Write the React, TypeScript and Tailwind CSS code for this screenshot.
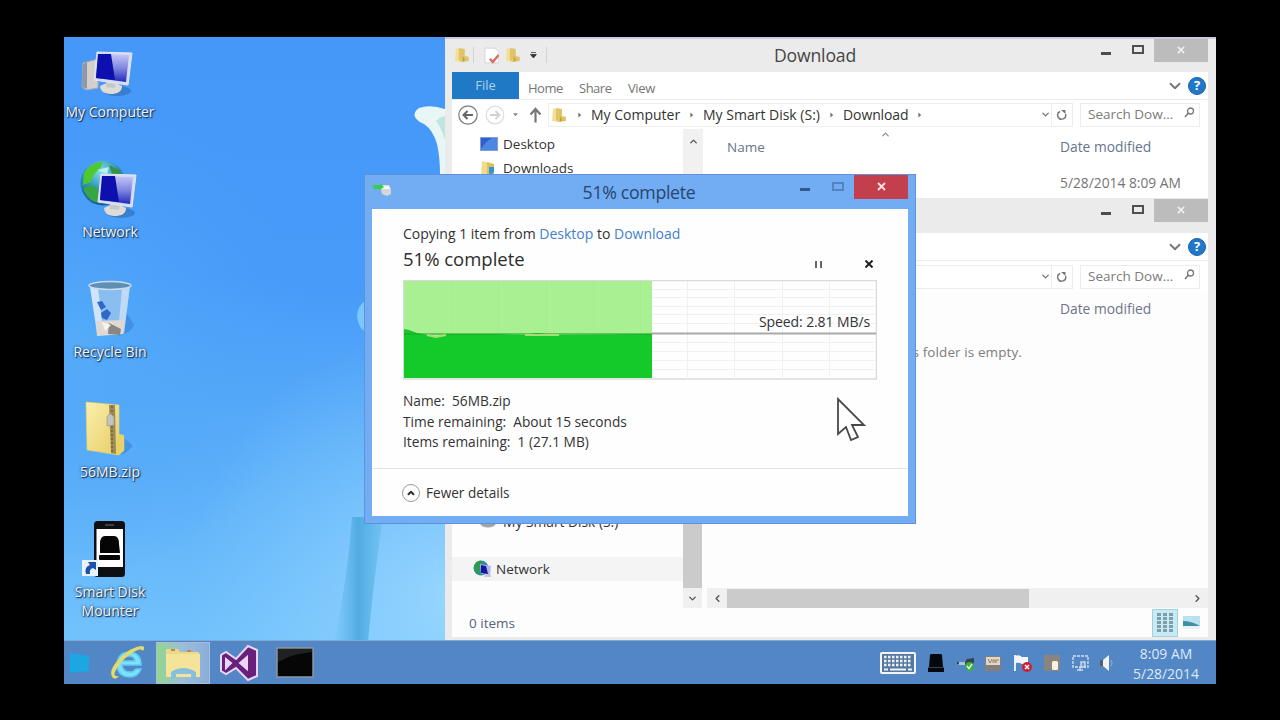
import React from 'react';
import { ChevronDown, ChevronLeft, ChevronRight, ChevronUp } from 'lucide-react';

const Monitor: React.FC = () => (
  <g>
    <ellipse cx="21" cy="39" rx="14" ry="5" fill="#2c62a8" opacity="0.5" />
    <path d="M4 34 Q15 27 26 34 Q26 42 14 42 Q4 41 4 34Z" fill="#dedcd4" />
    <path d="M10 28 L20 30 L19 36 L10 35Z" fill="#c4c8cf" />
    <path d="M1 0 L36 1 L32 33 L-2 28Z" fill="#d6dcef" stroke="#e4e6f2" strokeWidth="1" />
    <path d="M2 2 L33 3 L30 30 L0 26Z" fill="url(#screen)" />
    <path d="M2 2 L15 2 L19 28 L0 26Z" fill="#0d0fae" />
  </g>
);

const MyComputerIcon: React.FC = () => (
  <svg width="92" height="60" viewBox="0 0 92 60">
    <path d="M19 23 L34 19 L34 48 L22 50 L18 47Z" fill="#d3cfca" stroke="#a7abb3" strokeWidth="1" />
    <path d="M19 24 L23 22 L23 49 L18 47Z" fill="#8f98a8" />
    <g transform="translate(32 12)">
      <Monitor />
    </g>
  </svg>
);

const NetworkIcon: React.FC = () => (
  <svg width="92" height="60" viewBox="0 0 92 60">
    <circle cx="39" cy="23" r="22.5" fill="url(#globe)" />
    <path d="M20 13 Q28 2 39 2 L36 9 Q28 14 27 22 L19 25Z" fill="#50c92f" />
    <path d="M20 28 Q30 22 34 31 L36 43 Q26 43 20 31Z" fill="#36a545" />
    <path d="M45 5 L56 10 L58 17 L48 14Z" fill="#39914a" />
    <path d="M33 10 L45 7 L43 14Z" fill="#b9f0f3" />
    <g transform="translate(36 14)">
      <Monitor />
    </g>
  </svg>
);

const RecycleBinIcon: React.FC = () => (
  <svg width="92" height="60" viewBox="0 0 92 60">
    <path d="M62 32 L70 45 Q67 53 54 56Z" fill="#2c6fc4" opacity="0.4" />
    <path d="M26 5 L66 5 L60 54 L33 56Z" fill="#9cc6ee" opacity="0.75" />
    <path d="M26 7 L34 8 L38 41 L33 52Z" fill="#e2effb" opacity="0.8" />
    <path d="M58 8 L66 6 L60 53 L55 42Z" fill="#d7e6f6" opacity="0.7" />
    <path d="M32 41 L60 40 L59 54 L33 56Z" fill="#ded9d2" />
    <path d="M45 43 L57 49 L56 55 L44 54Z" fill="#8b8682" />
    <path d="M38 42 L47 45 L41 51Z" fill="#f6f4ee" />
    <path d="M33 22 L38 21 L42 27 L37 30Z M37 33 L43 29 L47 33 L43 40 L38 38Z" fill="#2f68cb" />
    <ellipse cx="46" cy="5.5" rx="21" ry="4" fill="#608fb6" stroke="#c8dced" strokeWidth="1.5" />
  </svg>
);

const ZipIcon: React.FC = () => (
  <svg width="92" height="60" viewBox="0 0 92 60">
    <path d="M58 36 L69 46 L60 54 L48 54Z" fill="#2c6fc4" opacity="0.4" />
    <path d="M22 2 L55 5 L55 36 L60 37 L60 50 L55 55 L23 50Z" fill="url(#folder)" stroke="#e2cb70" strokeWidth="0.7" />
    <path d="M55 34 L60 35 L60 51 L54 55 L50 54Z" fill="#e8d268" />
    <path d="M45 5 L51 5 L52 54 L47 53Z" fill="#9e8b54" />
    <path d="M48 6 V53" stroke="#6f6449" strokeWidth="1.5" strokeDasharray="2 2" />
    <path d="M43 17 Q46 11 50 17 L50 25 L43 26Z" fill="#c4c4bf" stroke="#a19c88" strokeWidth="0.8" />
  </svg>
);

const MounterIcon: React.FC = () => (
  <svg width="92" height="60" viewBox="0 0 92 60">
    <rect x="30" y="1" width="31" height="56" rx="3.5" fill="#0d1013" />
    <path d="M41 5 H50" stroke="#5d6266" strokeWidth="1.2" />
    <rect x="32.5" y="9" width="26.5" height="38" fill="#ffffff" />
    <path d="M36 33 L36 24 Q36 16 41 16 H50 Q55 16 55 24 L56 33Z" fill="#050505" />
    <rect x="35" y="35" width="21" height="5" rx="1" fill="#050505" />
    <rect x="18" y="40" width="16" height="16" fill="#e9f3fb" />
    <path d="M22 54 Q20 47 26 45 L24 42 H32 V50 L29 48 Q25 49 26 54Z" fill="#1c4fae" />
  </svg>
);

const SmallFolder: React.FC<{ className?: string }> = ({ className }) => (
  <svg className={className} width="16" height="16" viewBox="0 0 16 16">
    <path d="M2 1 L8 3 V15 L1 14Z" fill="#f2df95" />
    <path d="M5 1 L11 2 V9 L15 10 V14 L8 15 L5 13Z" fill="#dfc567" />
    <path d="M9 9 L11 13 L9 15Z" fill="#b89c48" />
  </svg>
);

const SmallNetwork: React.FC = () => (
  <svg width="20" height="18" viewBox="0 0 20 18">
    <circle cx="8" cy="8" r="7.5" fill="#2e8f9b" />
    <path d="M1 6 Q4 0 9 1 L6 8 L7 14 Q2 13 1 6Z" fill="#2f9c46" />
    <path d="M7 4 L18 6 L17 15 L8 14Z" fill="#b4b3ea" />
    <path d="M8 5 L13 6 L15 14 L8 13Z" fill="#1616a0" />
    <path d="M12 15 H18 V17 H11Z" fill="#c9c9d6" />
  </svg>
);

const HelpBadge: React.FC = () => (
  <span className="ml-[4px] mr-[2px] flex h-[18px] w-[18px] items-center justify-center rounded-full border border-[#1564ad] bg-[#2178c8] text-[13px] font-bold leading-none text-white">?</span>
);

const WindowButtons: React.FC = () => (
  <div className="flex h-6 shrink-0 items-start">
    <span className="mt-[13px] h-[3px] w-[10px] bg-[#4c4c4c]" />
    <span className="ml-[21px] mt-[6px] h-[9px] w-[12px] border-2 border-[#505050]" />
    <span className="ml-[10px] flex h-[23px] w-[54px] items-center justify-center bg-[#bcbcbc]">
      <svg className="-mt-px" width="8" height="8" viewBox="0 0 9 9"><path d="M1 1 L8 8 M8 1 L1 8" stroke="#efefef" strokeWidth="1.8" /></svg>
    </span>
  </div>
);

const RefreshIcon: React.FC = () => (
  <svg width="12" height="12" viewBox="0 0 12 12">
    <path d="M4 2.5 A4 4 0 1 0 9.5 5" fill="none" stroke="#777" strokeWidth="1.4" />
    <path d="M5 1 H9.500 V5Z" fill="#777" />
  </svg>
);

const SearchBox: React.FC = () => (
  <>
    <div className="flex h-[24px] w-[21px] items-center justify-center border-y border-r border-[#ececec]">
      <RefreshIcon />
    </div>
    <div className="ml-[7px] flex h-[24px] w-[120px] items-center justify-between border border-[#ebebeb] pl-[7px] pr-[4px]">
      <span className="whitespace-nowrap text-[13.5px] text-[#7b7b7b]">Search Dow...</span>
      <svg className="-mt-1" width="11" height="11" viewBox="0 0 11 11">
        <circle cx="6.5" cy="4" r="3" fill="none" stroke="#777" strokeWidth="1.3" />
        <path d="M4.300 6.200 L1 10" stroke="#777" strokeWidth="1.5" />
      </svg>
    </div>
  </>
);

const Crumb: React.FC = () => (
  <svg width="4" height="6" viewBox="0 0 5 7"><path d="M0.500 0.500 L4 3.500 L0.500 6.500Z" fill="#707070" /></svg>
);

const DownloadWindow: React.FC = () => (
  <div className="absolute left-[381px] top-0 flex h-[162px] w-[771px] flex-col border-t-2 border-[#cfc8dd] bg-[#ebebeb] pl-[7px] pr-[8px]">
    <div className="flex h-[33px] shrink-0">
      <div className="flex h-[32px] w-[95px] items-center">
        <SmallFolder className="ml-[2px]" />
        <span className="ml-[3px] h-4 w-px bg-[#d2d2d2]" />
        <svg className="ml-[10px]" width="16" height="17" viewBox="0 0 16 17">
          <path d="M1 1 H11 L15 5 V16 H1Z" fill="#fff" stroke="#cfcfcf" strokeWidth="0.8" />
          <path d="M6 12 L9 15 L15 8" fill="none" stroke="#d8705c" strokeWidth="2.5" />
        </svg>
        <SmallFolder className="ml-[6px]" />
        <svg className="ml-[9px]" width="7" height="7" viewBox="0 0 7 7"><path d="M1 0.500 H6 M0.500 2.500 H6.500 L3.500 6Z" fill="#333" stroke="#333" strokeWidth="0.8" /></svg>
        <span className="ml-[9px] h-4 w-px shrink-0 bg-[#d2d2d2]" />
      </div>
      <div className="flex-1 pr-[18px] text-center text-[17.6px] leading-[32px] tracking-[-0.15px] text-[#454545]">Download</div>
      <WindowButtons />
    </div>
    <div className="flex h-[28px] shrink-0 items-center border-b border-[#ececec] bg-white text-[13px] text-[#757575]">
      <span className="-mt-px flex h-[27px] w-[67px] items-center justify-center bg-[#1f79c4] pt-[2px] text-[#a9d2f0]">File</span>
      <span className="ml-[9px] mt-[7px] w-[51px] tracking-[-0.5px]">Home</span>
      <span className="mt-[7px] w-[49px] tracking-[-0.5px]">Share</span>
      <span className="mt-[7px] flex-1 tracking-[-0.4px]">View</span>
      <ChevronDown size={18} strokeWidth={2.5} color="#777" />
      <HelpBadge />
    </div>
    <div className="flex h-[29px] shrink-0 items-center bg-white">
      <svg className="ml-[5px]" width="22" height="22" viewBox="0 0 22 22">
        <circle cx="11" cy="11" r="9.2" fill="none" stroke="#7c7c7c" strokeWidth="1.2" />
        <path d="M16 11 H7 M10.500 7 L6.500 11 L10.500 15" fill="none" stroke="#666" strokeWidth="2" />
      </svg>
      <svg className="ml-[5px]" width="22" height="22" viewBox="0 0 22 22">
        <circle cx="11" cy="11" r="8.8" fill="none" stroke="#dcdcdc" strokeWidth="1.2" />
        <path d="M6 11 H15 M11.500 7 L15.500 11 L11.500 15" fill="none" stroke="#d2d2d2" strokeWidth="1.8" />
      </svg>
      <svg className="ml-[7px]" width="5" height="4" viewBox="0 0 6 4"><path d="M0 0 H6 L3 3.500Z" fill="#858585" /></svg>
      <svg className="ml-[11px]" width="13" height="16" viewBox="0 0 13 16"><path d="M6.500 15.500 V2 M1.500 7.500 L6.500 2 L11.500 7.500" fill="none" stroke="#777" strokeWidth="2.2" /></svg>
      <div className="ml-[6px] flex h-[24px] flex-1 items-center border border-[#efefef] text-[14px] text-[#333]">
        <SmallFolder className="ml-[2px]" />
        <span className="ml-[11px]"><Crumb /></span>
        <span className="ml-[9px] w-[99px]">My Computer</span>
        <Crumb />
        <span className="ml-[9px] w-[127px] whitespace-nowrap">My Smart Disk (S:)</span>
        <Crumb />
        <span className="ml-[9px] w-[75px] tracking-[-0.1px]">Download</span>
        <Crumb />
        <ChevronDown className="ml-auto" size={11} strokeWidth={3} color="#777" />
      </div>
      <SearchBox />
      <span className="w-[8px]" />
    </div>
    <div className="flex flex-1 overflow-hidden bg-white text-[13.5px]">
      <div className="w-[231px] pl-[28px] pt-[3px] text-[#333]">
        <div className="flex h-[24px] items-center gap-[5px]">
          <svg width="18" height="14" viewBox="0 0 18 14">
            <rect x="0.5" y="0.5" width="17" height="13" fill="#4c86e4" stroke="#7da0cf" />
            <path d="M1 1 H12 Q5 5 1 12Z" fill="#2f5fcf" />
          </svg>
          <span>Desktop</span>
        </div>
        <div className="flex h-[24px] items-center gap-[5px]">
          <svg width="18" height="17" viewBox="0 0 18 17">
            <path d="M2 1 L9 3 V16 L1 15Z" fill="#f0dc8b" />
            <path d="M7 2 L14 4 V15 L7 16Z" fill="#dcc15d" />
            <path d="M9 7 H14 V12 L11 15 L9 13Z" fill="#2c96d6" />
          </svg>
          <span>Downloads</span>
        </div>
      </div>
      <div className="flex w-[20px] justify-center bg-[#f1f1f1] pt-[7px]">
        <ChevronUp size={11} strokeWidth={3} color="#555" />
      </div>
      <div className="flex-1 pl-[24px] pt-[8px] text-[#68748c]">
        <div className="flex h-[20px] items-center">
          <span className="w-[153px]">Name</span>
          <ChevronUp className="-mt-[26px]" size={11} strokeWidth={2.5} color="#888" />
          <span className="ml-[169px] text-[13.8px]">Date modified</span>
        </div>
        <div className="mt-[16px] flex h-[20px] items-center pl-[333px] text-[13.8px] text-[#747474]">5/28/2014 8:09 AM</div>
      </div>
    </div>
  </div>
);

const EmptyWindow: React.FC = () => (
  <div className="absolute left-[381px] top-[161px] flex h-[443px] w-[771px] flex-col bg-[#ebebeb] pb-[4px] pl-[7px] pr-[8px]">
    <div className="flex h-[35px] shrink-0 justify-end pt-px">
      <WindowButtons />
    </div>
    <div className="flex h-[28px] shrink-0 items-center justify-end border-b border-[#ececec] bg-white">
      <ChevronDown size={18} strokeWidth={2.5} color="#777" />
      <HelpBadge />
    </div>
    <div className="flex h-[31px] shrink-0 items-center bg-white">
      <div className="ml-[100px] flex h-[24px] flex-1 items-center border border-[#ebebeb]">
        <ChevronDown className="ml-auto" size={11} strokeWidth={3} color="#777" />
      </div>
      <SearchBox />
      <span className="w-[8px]" />
    </div>
    <div className="flex flex-1 bg-[#fdfdfd]">
      <div className="flex w-[231px] flex-col justify-end pb-[27px] text-[13.5px] text-[#333]">
        <div className="flex h-[22px] items-center gap-[6px] pl-[28px]">
          <svg width="17" height="12" viewBox="0 0 17 12">
            <ellipse cx="8" cy="7" rx="8" ry="4.5" fill="#a2a6ab" />
            <ellipse cx="10" cy="5" rx="5" ry="3" fill="#dddddd" />
          </svg>
          <span className="whitespace-nowrap text-[13.8px]">My Smart Disk (S:)</span>
        </div>
        <div className="mt-[24px] flex h-[24px] items-center gap-[3px] bg-[#f4f4f4] pl-[21px]">
          <SmallNetwork />
          <span>Network</span>
        </div>
      </div>
      <div className="flex w-[19px] flex-col bg-[#f0f0f0]">
        <div className="flex-1 bg-[#cbcbcb]" />
        <div className="flex h-[20px] items-center justify-center"><ChevronDown size={11} strokeWidth={3} color="#555" /></div>
      </div>
      <div className="ml-[5px] flex flex-1 flex-col">
        <div className="flex-1 pt-[7px]">
          <div className="pl-[353px] text-[13.8px] leading-[20px] text-[#6e7489]">Date modified</div>
          <div className="mt-[23px] whitespace-nowrap pr-[186px] text-right text-[13.5px] leading-[20px] tracking-[0.1px] text-[#7c7c7c]">This folder is empty.</div>
        </div>
        <div className="flex h-[20px] items-center bg-[#f0f0f0]">
          <span className="flex w-[20px] justify-center"><ChevronLeft size={11} strokeWidth={3} color="#555" /></span>
          <span className="h-[19px] w-[302px] bg-[#cbcbcb]" />
          <ChevronRight className="ml-auto mr-[5px]" size={11} strokeWidth={3} color="#555" />
        </div>
      </div>
    </div>
    <div className="flex h-[29px] shrink-0 items-center bg-[#fdfdfd] pl-[17px]">
      <span className="pt-px text-[13.5px] text-[#56627e]">0 items</span>
      <span className="ml-auto flex h-[28px] w-[26px] items-center justify-center border border-[#9fd3e0] bg-[#c9eaf3]">
        <svg width="18" height="20" viewBox="0 0 18 20">
          {[0, 4, 8, 12, 16].map((y) => (
            <path key={y} d={`M1 ${y + 1.5} h4 M7 ${y + 1.5} h4 M13 ${y + 1.5} h4`} stroke="#7c9fae" strokeWidth="2.8" />
          ))}
        </svg>
      </span>
      <svg className="ml-[5px] mr-[8px]" width="17" height="13" viewBox="0 0 17 13">
        <rect width="17" height="13" fill="#b9e1f0" />
        <path d="M0 5 Q8 5 17 10 H0Z" fill="#3f8ea3" />
        <path d="M0 10 H17 V13 H0Z" fill="#e5f3f8" />
      </svg>
    </div>
  </div>
);

const SpeedGraph: React.FC = () => (
  <svg width="474" height="100" viewBox="0 0 474 100">
    <rect x="0.5" y="0.5" width="473" height="98.5" fill="#fefefe" stroke="#dadada" strokeWidth="1.5" />
    {[9, 17, 26, 34, 43, 62, 71, 80, 89].map((y) => (
      <path key={y} d={`M1 ${y}.5 H472`} stroke="#f0f0f0" />
    ))}
    {[48, 95, 143, 190, 237, 284, 331, 379, 426].map((x) => (
      <path key={x} d={`M${x}.5 1 V99`} stroke="#f0f0f0" />
    ))}
    <rect x="1" y="1" width="248" height="97" fill="#a8f091" />
    {[48, 95, 143, 190, 237].map((x) => (
      <path key={x} d={`M${x}.5 1 V54`} stroke="#a4ec8e" />
    ))}
    <path d="M1 98 V49 L6 50 L14 53 L24 55 L34 57 L44 54 L92 54 L122 55 L134 53 L154 55 L249 54 V98Z" fill="#14c92a" />
    <path d="M1 54 H249" stroke="#1b9f2a" strokeWidth="1.5" opacity="0.7" />
    <path d="M24 55 L33 57 L43 55 M122 55 L140 55 L156 55" stroke="#a5de72" strokeWidth="1.8" fill="none" />
    <path d="M249 53.500 H473" stroke="#a9a9a9" strokeWidth="2" />
  </svg>
);

const CopyDialog: React.FC = () => (
  <div className="absolute left-[300px] top-[137px] flex h-[350px] w-[552px] flex-col border border-[#5f92d8] bg-[#72acf2] px-[7px] pb-[7px]">
    <div className="flex h-[34px] shrink-0">
      <svg className="mt-[7px]" width="20" height="16" viewBox="0 0 20 16">
        <path d="M8 3 H17 L19 7 V12 L15 14 L10 12Z" fill="#d5d7d6" />
        <path d="M9 4 H17 L18 7 H9Z" fill="#f4f6f4" />
        <path d="M0 3 H8 V1 L12 5 L8 8 V7 H2Z" fill="#35d04a" />
      </svg>
      <div className="flex-1 pl-[86px] text-center text-[17.7px] leading-[35px] tracking-[-0.3px] text-[#26466e]">51% complete</div>
      <span className="mt-[13px] h-[3px] w-[10px] bg-[#31598f]" />
      <span className="ml-[22px] mt-[7px] h-[9px] w-[12px] border-2 border-[#5583bd]" />
      <span className="ml-[10px] flex h-[24px] w-[54px] items-center justify-center bg-[#c33f4e]">
        <svg className="-mt-px" width="9" height="9" viewBox="0 0 9 9"><path d="M1 1 L8 8 M8 1 L1 8" stroke="#f8e3e5" strokeWidth="1.8" /></svg>
      </span>
    </div>
    <div className="flex flex-1 flex-col bg-[#fefefe] pt-[15px] text-[14px] text-[#333]">
      <div className="pl-[31px] leading-[20px]">
        Copying 1 item from <span className="text-[#4580cf]">Desktop</span> to <span className="text-[#4580cf]">Download</span>
      </div>
      <div className="flex h-[31px] items-center pl-[31px] pr-[35px]">
        <span className="-mt-px flex-1 text-[18.5px] text-[#2d2d2d]">51% complete</span>
        <span className="mt-[9px] flex gap-[3px]">
          <span className="h-[7px] w-[2px] bg-[#666]" />
          <span className="h-[7px] w-[2px] bg-[#666]" />
        </span>
        <svg className="ml-[43px] mt-[9px]" width="8" height="8" viewBox="0 0 8 8"><path d="M0.500 0.500 L7.500 7.500 M7.500 0.500 L0.500 7.500" stroke="#222" strokeWidth="2" /></svg>
      </div>
      <div className="relative ml-[31px] mt-[5px] h-[100px] w-[474px]">
        <SpeedGraph />
        <span className="absolute right-[7px] top-[32px] whitespace-nowrap leading-[20px] tracking-[-0.1px]">Speed: 2.81 MB/s</span>
      </div>
      <div className="mt-[11px] pl-[31px] text-[13.7px] leading-[20.5px]">
        <div>Name:&nbsp; 56MB.zip</div>
        <div>Time remaining:&nbsp; About 15 seconds</div>
        <div>Items remaining:&nbsp; 1 (27.1 MB)</div>
      </div>
      <div className="mt-auto flex h-[48px] items-center gap-[6px] border-t border-[#e4e4e4] pl-[30px] text-[13.6px]">
        <span className="flex h-[18px] w-[18px] items-center justify-center rounded-full border border-[#9a9a9a]">
          <ChevronUp size={10} strokeWidth={5} color="#333" />
        </span>
        <span className="pt-[2px]">Fewer details</span>
      </div>
    </div>
  </div>
);

const shortcuts = [
  { name: 'My Computer', icon: <MyComputerIcon /> },
  { name: 'Network', icon: <NetworkIcon /> },
  { name: 'Recycle Bin', icon: <RecycleBinIcon /> },
  { name: '56MB.zip', icon: <ZipIcon /> },
  { name: 'Smart Disk Mounter', icon: <MounterIcon /> },
];

const Wallpaper: React.FC = () => (
  <svg className="absolute inset-0" width="1152" height="604" viewBox="0 0 1152 604">
    <defs>
      <linearGradient id="sky" x1="0" y1="0" x2="0" y2="1">
        <stop offset="0" stopColor="#4598f8" />
        <stop offset="0.4" stopColor="#479bf9" />
        <stop offset="0.7" stopColor="#5baff9" />
        <stop offset="1" stopColor="#72c2fc" />
      </linearGradient>
      <radialGradient id="glow" gradientUnits="userSpaceOnUse" cx="390" cy="560" r="270">
        <stop offset="0" stopColor="#a2dcff" stopOpacity="0.8" />
        <stop offset="1" stopColor="#8cd0ff" stopOpacity="0" />
      </radialGradient>
      <radialGradient id="side" gradientUnits="userSpaceOnUse" cx="10" cy="300" r="240">
        <stop offset="0" stopColor="#55aefa" stopOpacity="0.8" />
        <stop offset="1" stopColor="#4ba2f8" stopOpacity="0" />
      </radialGradient>
      <linearGradient id="stem" x1="0" y1="0" x2="1" y2="0">
        <stop offset="0" stopColor="#63b8ee" stopOpacity="0.1" />
        <stop offset="0.5" stopColor="#50abe2" />
        <stop offset="1" stopColor="#62bbe9" stopOpacity="0.5" />
      </linearGradient>
      <linearGradient id="screen" x1="0" y1="0" x2="0" y2="1">
        <stop offset="0" stopColor="#c3c7f8" />
        <stop offset="0.5" stopColor="#8088e0" />
        <stop offset="1" stopColor="#2328bb" />
      </linearGradient>
      <radialGradient id="globe" cx="0.45" cy="0.25" r="0.8">
        <stop offset="0" stopColor="#7fdcec" />
        <stop offset="0.5" stopColor="#2b93ba" />
        <stop offset="1" stopColor="#175096" />
      </radialGradient>
      <linearGradient id="folder" x1="0" y1="0" x2="1" y2="1">
        <stop offset="0" stopColor="#fbefac" />
        <stop offset="1" stopColor="#e5cb61" />
      </linearGradient>
    </defs>
    <rect width="1152" height="604" fill="url(#sky)" />
    <rect width="1152" height="604" fill="url(#side)" />
    <rect width="1152" height="604" fill="url(#glow)" />
    <path d="M288 480 L319 480 Q310 540 304 604 L270 604 Q284 540 288 480Z" fill="url(#stem)" />
    <path d="M381 72 Q366 67 355 71 Q349 75 351 80 Q354 85 360 87 Q369 93 373 107 Q376 120 376 137 H381Z" fill="#e8f6f5" />
    <path d="M381 79 Q376 80 372 84 Q378 92 381 103Z" fill="#c0e4de" />
    <path d="M301 264 Q294 268 293 279 Q294 290 301 295Z" fill="#78c8fb" />
  </svg>
);

const Taskbar: React.FC = () => (
  <div className="absolute bottom-0 left-0 flex h-[44px] w-full items-center border-t border-[#7fa8d6] bg-[#5286c4]">
    <svg className="ml-[6px]" width="20" height="24" viewBox="0 0 20 24">
      <path d="M0 2 L19 5 V20 L0 22Z" fill="#1aa8e4" />
      <path d="M9 3 V21 M0 12 H19" stroke="#289fdb" strokeWidth="1" />
    </svg>
    <svg className="ml-[18px]" width="38" height="38" viewBox="0 0 38 38">
      <path d="M33 21 H14 Q15 28 22 28 Q26 28 28 25 H33 Q30 33 21 33 Q9 32 9 20 Q10 8 22 8 Q33 9 33 21Z M14 17 H27 Q26 12 21 12 Q15 12 14 17Z" fill="#7ce2fa" stroke="#5fcdf3" strokeWidth="1.5" fillRule="evenodd" />
      <path d="M5 34 Q-1 27 12 14 Q23 3 33 2 Q38 2 35 7 Q33 3 24 9 Q11 18 7 28 Q5 33 11 32 Q8 36 5 34Z" fill="#e3da69" />
    </svg>
    <div className="ml-[10px] flex h-[42px] w-[54px] items-center justify-center border border-[#a3bfdc] bg-linear-to-r from-[#92d68a] via-[#9bbddb] to-[#8baed8]">
      <svg width="40" height="36" viewBox="0 0 40 36">
        <path d="M3 4 H15 L17 7 H36 V32 H3Z" fill="#ecd987" />
        <path d="M8 4 H12 V6 H8Z M24 5 H28 V7 H24Z" fill="#bf8c45" />
        <path d="M3 9 H37 V32 H3Z" fill="#f4e399" />
        <path d="M8 33 V27 Q20 19 33 27 V33 H28 V29 H13 V33Z" fill="#85c1dd" />
      </svg>
    </div>
    <svg className="ml-[8px]" width="42" height="40" viewBox="0 0 42 40">
      <path d="M3 12 L8 9 L18 16 L30 3 L39 7 V33 L30 37 L18 25 L8 31 L3 28Z M8 16 V25 L13 20Z M29 14 L22 20 L29 26Z" fill="#68217a" stroke="#ead5f3" strokeWidth="2" fillRule="evenodd" />
      <path d="M8 16 V25 L13 20Z M29 14 L22 20 L29 26Z" fill="#ead5f3" />
    </svg>
    <svg className="ml-[16px]" width="38" height="31" viewBox="0 0 38 31">
      <rect x="1" y="1" width="36" height="29" fill="#060606" stroke="#8e979f" strokeWidth="1.5" />
      <path d="M2 2 H36 V5 Q16 7 2 15Z" fill="#1f2122" />
    </svg>
    <svg className="ml-auto" width="36" height="22" viewBox="0 0 36 22">
      <rect x="1" y="1" width="34" height="20" rx="1" fill="#54789e" stroke="#f4f5f6" strokeWidth="2" />
      <path d="M4 5 H32 M4 9 H32 M4 13 H32" stroke="#eef0f3" strokeWidth="2.5" strokeDasharray="2.5 1.5" />
      <path d="M4 17.500 H8 M10 17.500 H26 M28 17.500 H32" stroke="#eef0f3" strokeWidth="2" />
    </svg>
    <svg className="ml-[11px]" width="18" height="20" viewBox="0 0 18 20">
      <path d="M2 14 L3 2 Q3 1 5 1 H13 Q15 1 15 2 L16 14Z M1 14.500 H17 V19 H1Z" fill="#05080c" />
    </svg>
    <svg className="ml-[12px]" width="18" height="18" viewBox="0 0 18 18">
      <path d="M0 8 H8 L10 5 L17 4 V9 L9 12 L8 10 H0Z" fill="#38434a" />
      <path d="M2 8 H8 V11 H2Z" fill="#b4c3cf" />
      <circle cx="12.5" cy="12.5" r="4.5" fill="#39ae43" />
      <path d="M10 12 L12 14.500 L15 10" stroke="#e3f7e0" strokeWidth="1.5" fill="none" />
    </svg>
    <svg className="ml-[9px]" width="18" height="18" viewBox="0 0 18 18">
      <rect x="1" y="2" width="16" height="15" fill="#857f78" />
      <rect x="2" y="3" width="14" height="8" fill="#dfd9cd" />
      <path d="M4 5 L6 9 L8 5 M9 9 V6 H11 V9 M12 9 V6 H15" stroke="#9b8060" fill="none" />
    </svg>
    <svg className="ml-[11px]" width="20" height="20" viewBox="0 0 20 20">
      <path d="M2 2 V18" stroke="#e6ecf3" strokeWidth="2" />
      <path d="M2 3 Q6 1 9 4 L15 4 V11 L9 11 Q6 9 2 10Z" fill="#f4f7fa" />
      <circle cx="14" cy="14" r="5" fill="#cd2133" />
      <path d="M12 12 L16 16 M16 12 L12 16" stroke="#fff" strokeWidth="1.5" />
    </svg>
    <svg className="ml-[10px]" width="18" height="18" viewBox="0 0 18 18">
      <rect x="1" y="1" width="16" height="16" fill="#888580" />
      <rect x="9" y="7" width="6" height="9" rx="1.5" fill="#f7f3de" />
    </svg>
    <svg className="ml-[10px]" width="19" height="18" viewBox="0 0 19 18">
      <rect x="2" y="2" width="15" height="11" fill="none" stroke="#b1c9e5" strokeWidth="1.8" strokeDasharray="3 1" />
      <path d="M9 13 V17 M6 16 H12 M10 8 H14 V13 H10Z" stroke="#c8d9ec" strokeWidth="1.5" fill="#6f9bd0" />
    </svg>
    <svg className="ml-[9px]" width="17" height="18" viewBox="0 0 17 18">
      <path d="M1 6 H4 L10 1 V17 L4 12 H1Z" fill="#eff2f6" />
      <path d="M1 6 H4 V12 H1Z" fill="#54606f" />
      <path d="M12 6 Q14 9 12 12" fill="none" stroke="#86aad4" strokeWidth="1.2" />
    </svg>
    <div className="ml-[9px] mr-[9px] w-[82px] whitespace-nowrap pt-[3px] text-center text-[13.9px] leading-[20px] text-[#dceaf8]">
      <div>8:09 AM</div>
      <div>5/28/2014</div>
    </div>
  </div>
);

const App: React.FC = () => {
  return (
    <div className="h-[720px] w-[1280px] overflow-hidden bg-black px-16 pt-[37px] font-['Open_Sans','Noto_Sans',sans-serif]">
      <div className="relative h-[647px] w-[1152px] overflow-hidden">
        <Wallpaper />
        <div className="relative flex w-[92px] flex-col pt-[3px]">
          {shortcuts.map((item) => (
            <div key={item.name} className="flex h-[120px] flex-col items-center">
              {item.icon}
              <span className="mt-[2px] w-[92px] text-center text-[14px] leading-[19px] text-[#eef4fb] [text-shadow:1px_1px_1px_#132c50,0_0_3px_#1c3a63]">
                {item.name}
              </span>
            </div>
          ))}
        </div>
        <DownloadWindow />
        <EmptyWindow />
        <CopyDialog />
        <Taskbar />
        {/* Mouse pointer */}
        <svg className="absolute left-[772px] top-[360px]" width="32" height="46" viewBox="0 0 32 46">
          <path d="M2 2 V37 L10 30 L15 43 L22 40 L16 28 H28Z" fill="#fefefe" stroke="#484848" strokeWidth="1.8" />
        </svg>
      </div>
    </div>
  );
};

export default App;
